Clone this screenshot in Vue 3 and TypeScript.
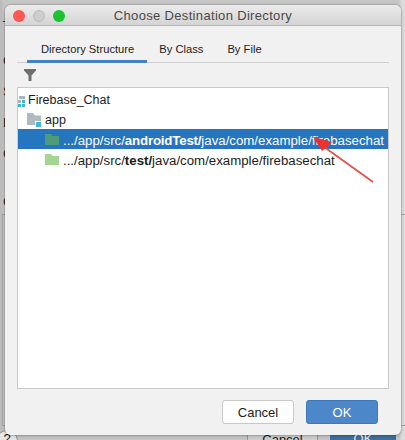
<script setup lang="ts">
const tabs = ["Directory Structure", "By Class", "By File"];
</script>

<template>
  <div class="desk">
    <span class="peek peek-a">_</span>
    <span class="peek peek-b">C</span>
    <span class="peek peek-c">S</span>
    <span class="peek peek-d">D</span>
    <span class="peek peek-e">C</span>
    <span class="peek peek-f">C</span>
    <div class="under-box"></div>
    <div class="under-help">?</div>
    <div class="under-cancel">Cancel</div>
    <div class="under-ok">OK</div>

    <div class="dialog">
      <header class="titlebar">
        <div class="lights">
          <i class="light red"></i>
          <i class="light grey"></i>
          <i class="light green"></i>
        </div>
        <div class="title">Choose Destination Directory</div>
      </header>

      <div class="body">
        <nav class="tabs">
          <div v-for="(t, i) in tabs" :key="t" class="tab" :class="{ active: i === 0 }">{{ t }}</div>
        </nav>

        <div class="toolbar">
          <svg width="14" height="14" viewBox="0 0 14 14">
            <path d="M1 1h12v1.500L8.500 7.500V13h-3V7.500L1 2.500z" fill="#6e6e6e" />
          </svg>
        </div>

        <div class="tree">
          <div class="row row-root">
            <svg class="mod" width="7" height="13" viewBox="0 0 7 13">
              <rect x="1" y="1" width="6" height="3" fill="#a9b5be" />
              <rect x="0" y="5" width="3" height="3" fill="#a9b5be" />
              <rect x="4" y="5" width="3" height="3" fill="#40b6e0" />
              <rect x="0" y="9" width="3" height="3" fill="#40b6e0" />
              <rect x="4" y="9" width="3" height="3" fill="#40b6e0" />
            </svg>
            <span>Firebase_Chat</span>
          </div>
          <div class="row row-app">
            <svg width="15" height="15" viewBox="0 0 15 15">
              <path d="M0 0h6l2 2.500h6V12H0z" fill="#aeb9c0" />
              <rect x="8.500" y="8.500" width="6" height="6" fill="#40b6e0" stroke="#fff" stroke-width="1" />
            </svg>
            <span>app</span>
          </div>
          <div class="row row-pkg selected">
            <svg width="14" height="11" viewBox="0 0 14 11">
              <path d="M0 0h6l1.500 2H14v9H0z" fill="#4e9b79" />
            </svg>
            <span>.../app/src/<b>androidTest/</b>java/com/example/firebasechat</span>
          </div>
          <div class="row row-pkg">
            <svg width="14" height="11" viewBox="0 0 14 11">
              <path d="M0 0h6l1.500 2H14v9H0z" fill="#a5d58f" />
            </svg>
            <span>.../app/src/<b>test/</b>java/com/example/firebasechat</span>
          </div>
        </div>

        <footer class="actions">
          <button class="btn">Cancel</button>
          <button class="btn primary">OK</button>
        </footer>
      </div>
    </div>

    <svg class="arrow" width="405" height="440" viewBox="0 0 405 440">
      <path d="M373 182 L320 144" stroke="#ee4b45" stroke-width="1.600" fill="none" />
      <path d="M313 137 L332 142 L322 151z" fill="#f0302c" />
    </svg>
  </div>
</template>

<style scoped>
.desk {
  position: relative;
  width: 405px;
  height: 440px;
  overflow: hidden;
  background: linear-gradient(90deg, #b9b9b9, #c6c6c6 4px, #c6c6c6 399px, #dcdcdc 402px);
  font-family: "Liberation Sans", Arial, sans-serif;
  color: #1c1c1c;
}

.peek {
  position: absolute;
  left: 3px;
  font-size: 13px;
  color: #222;
}
.peek-a { top: 7px; }
.peek-b { top: 53px; }
.peek-c { top: 84px; }
.peek-d { top: 115px; }
.peek-e { top: 146px; }
.peek-f { top: 194px; }

.under-box {
  position: absolute;
  left: 2px;
  top: 214px;
  width: 410px;
  height: 210px;
  border: 1px solid #a4a4a4;
}
.under-help {
  position: absolute;
  left: -4px;
  top: 430px;
  width: 20px;
  height: 20px;
  border-radius: 50%;
  background: #e8e8e8;
  border: 1px solid #999;
  font-size: 13px;
  text-align: center;
}
.under-cancel {
  position: absolute;
  left: 247px;
  top: 434px;
  width: 69px;
  height: 24px;
  background: #cfcfcf;
  border: 1px solid #999;
  font-size: 13px;
  text-align: center;
  line-height: 10px;
}
.under-ok {
  position: absolute;
  left: 330px;
  top: 434px;
  width: 66px;
  height: 24px;
  background: #3f6f9f;
  color: #eee;
  font-size: 13px;
  text-align: center;
  line-height: 10px;
}

.dialog {
  position: absolute;
  left: 5px;
  top: 5px;
  width: 396px;
  height: 430px;
  border-radius: 6px;
  overflow: hidden;
  background: #f1f1f1;
  box-shadow: 0 0 0 1px rgba(0, 0, 0, 0.1), 0 1px 4px rgba(0, 0, 0, 0.2);
  display: flex;
  flex-direction: column;
}

.titlebar {
  height: 20px;
  flex: none;
  display: flex;
  align-items: center;
  position: relative;
  background: linear-gradient(#ebebeb, #d4d4d4);
  border-bottom: 1px solid #b5b5b5;
}
.lights {
  display: flex;
  gap: 8px;
  padding-left: 8px;
  position: relative;
  top: 1px;
}
.light {
  width: 12px;
  height: 12px;
  border-radius: 50%;
}
.red { background: #fc5753; }
.grey { background: #cdcdcd; border: 1px solid #bcbcbc; box-sizing: border-box; }
.green { background: #19c332; }
.title {
  position: absolute;
  left: 0;
  right: 0;
  text-align: center;
  font-size: 13px;
  letter-spacing: 0.33px;
  color: #4a4a4a;
}

.body {
  flex: 1;
  display: flex;
  flex-direction: column;
  padding: 0 12px;
}

.tabs {
  display: flex;
  height: 36px;
  flex: none;
  align-items: stretch;
  border-bottom: 1px solid #cfcfcf;
}
.tab {
  font-size: 11.200px;
  padding: 17px 12px 0;
  margin-bottom: -1px;
}
.tab.active {
  border-bottom: 3px solid #4083c9;
  margin-left: 10px;
  padding-left: 14px;
  padding-right: 13px;
}

.toolbar {
  height: 24px;
  flex: none;
  display: flex;
  align-items: center;
  padding-left: 6px;
}

.tree {
  flex: none;
  height: 299px;
  background: #fff;
  border: 1px solid #c9c9c9;
  font-size: 12.500px;
  padding-top: 1px;
}
.row {
  height: 20px;
  display: flex;
  align-items: center;
  white-space: nowrap;
}
.row span { padding-top: 2px; }
.row-root { gap: 3px; }
.row-root svg { margin-top: 4px; }
.row-app { padding-left: 9px; gap: 3px; }
.row-app svg { margin-top: 3px; }
.row-pkg {
  padding-left: 27px;
  gap: 4px;
  font-size: 13.250px;
}
.selected {
  background: #2675bf;
  color: #fff;
}
.selected b { letter-spacing: -0.17px; }

.actions {
  flex: 1;
  display: flex;
  justify-content: flex-end;
  gap: 12px;
  padding: 11px 11px 0 0;
}
.btn {
  width: 72px;
  height: 24px;
  font-family: inherit;
  font-size: 13px;
  color: #1c1c1c;
  background: #fff;
  border: 1px solid #c9c9c9;
  border-radius: 3px;
  padding: 0;
}
.primary {
  background: #4c87c9;
  border-color: #3f78b8;
  color: #fff;
  font-weight: 500;
}

.arrow {
  position: absolute;
  left: 0;
  top: 0;
  pointer-events: none;
}
</style>
